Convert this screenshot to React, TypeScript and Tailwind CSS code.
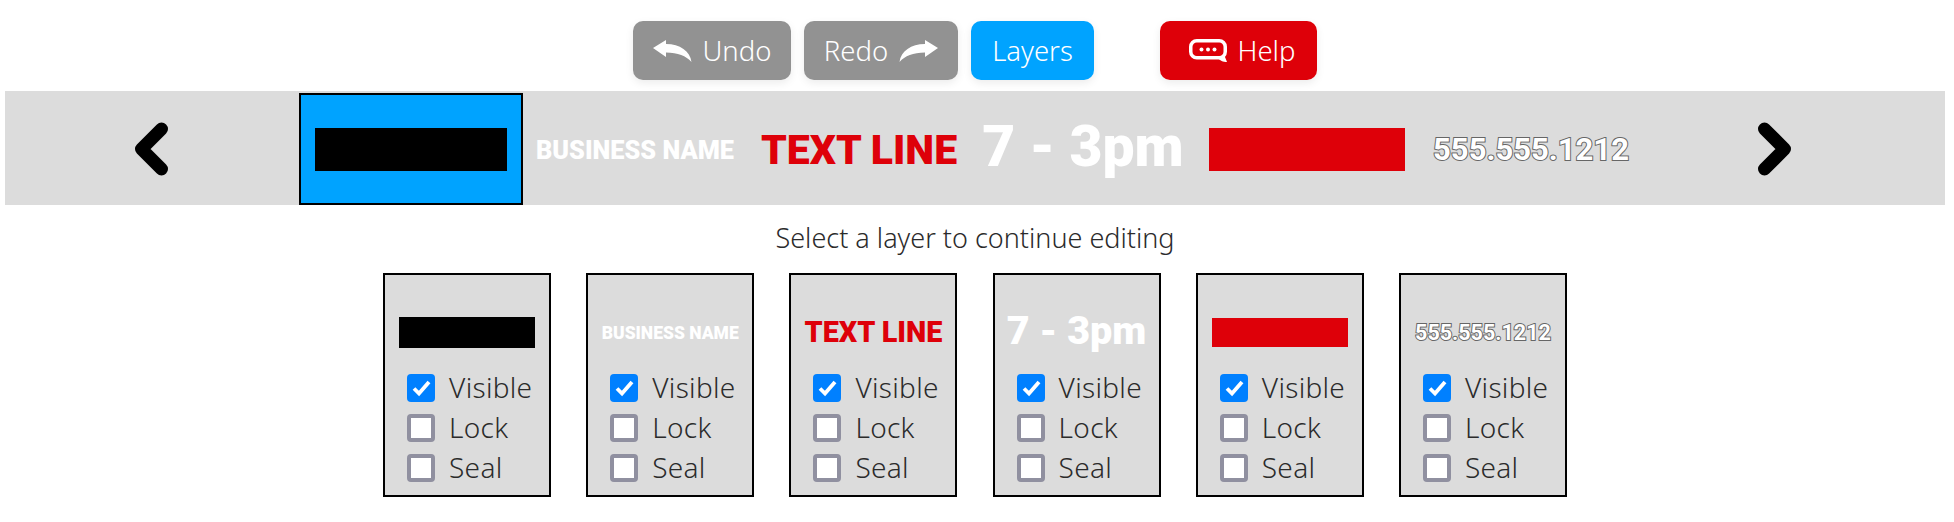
const ui = "font-['Noto_Sans',sans-serif]";
const logo = "font-['Roboto',sans-serif] whitespace-nowrap";
const outlined = "[-webkit-text-stroke:2px_#666] [paint-order:stroke_fill]";

function HelpIcon() {
  return (
    <svg viewBox="0 0 38 23" className="h-[23px] w-[38px]" fill="none">
      <rect x="1.75" y="1.75" width="34.5" height="17" rx="6" stroke="white" strokeWidth="3.5" />
      <path d="M28 18h8l2 5c-4 0-7-1-10-5z" fill="white" />
      <circle cx="12.5" cy="10.5" r="2" fill="white" />
      <circle cx="19" cy="10.5" r="2" fill="white" />
      <circle cx="25.5" cy="10.5" r="2" fill="white" />
    </svg>
  );
}

function ReplyArrow({ flip }: { flip?: boolean }) {
  return (
    <svg viewBox="0 0 39 22" className={`h-[22px] w-[39px] ${flip ? "-scale-x-100" : ""}`}>
      <path d="M0 8 13 0v4C27 4 37 11 38.5 22 33 16 25 12.5 13 12.5V17z" fill="white" />
    </svg>
  );
}

function Chevron({ flip }: { flip?: boolean }) {
  return (
    <svg viewBox="0 0 36 54" className={`h-[54px] w-[36px] ${flip ? "-scale-x-100" : ""}`} fill="none">
      <path d="M27.5 7 7.5 27l20 20" stroke="black" strokeWidth="13" strokeLinecap="round" strokeLinejoin="round" />
    </svg>
  );
}

function BandItem({ children, selected }: { children: React.ReactNode; selected?: boolean }) {
  return (
    <div
      className={`flex h-[112px] w-[224px] items-center justify-center ${
        selected ? "border-2 border-black bg-[#00a3ff]" : ""
      }`}
    >
      {children}
    </div>
  );
}

function Check({ label, checked }: { label: string; checked?: boolean }) {
  return (
    <label className="flex h-[28px] items-center gap-[14px]">
      {checked ? (
        <span className="flex size-[28px] items-center justify-center rounded-[4px] bg-[#0080ff]">
          <svg viewBox="0 0 28 28" className="size-[28px]" fill="none">
            <path d="M7 14.5l5 5L22 8" stroke="white" strokeWidth="3.8" />
          </svg>
        </span>
      ) : (
        <span className="size-[28px] rounded-[4px] border-[4px] border-[#9090a0] bg-white" />
      )}
      <span className="pb-[2px] text-[28px] font-light leading-none tracking-[0.3px] text-[#2b2b2b]">{label}</span>
    </label>
  );
}

function LayerCard({ children }: { children: React.ReactNode }) {
  return (
    <div className="h-[224px] w-[168px] border-2 border-black bg-[#dcdcdc]">
      <div className="flex h-[99px] items-end justify-center pb-[10.5px]">
        <div className="flex h-[62px] items-center justify-center">{children}</div>
      </div>
      <div className="flex flex-col gap-[12px] pl-[22px]">
        <Check label="Visible" checked />
        <Check label="Lock" />
        <Check label="Seal" />
      </div>
    </div>
  );
}

const btn =
  "flex h-[59px] items-center justify-center gap-[11px] rounded-[10px] text-[27.5px] font-light text-white shadow-[0_3px_8px_rgba(0,0,0,0.08)]";

export default function App() {
  return (
    <div className={`w-[1950px] bg-white pt-[21px] ${ui}`}>
      {/* Toolbar */}
      <div className="flex justify-center">
        <div className={`${btn} w-[158px] bg-[#929292]`}>
          <ReplyArrow />
          Undo
        </div>
        <div className={`${btn} ml-[13px] w-[154px] bg-[#929292]`}>
          Redo
          <ReplyArrow flip />
        </div>
        <div className={`${btn} ml-[13px] h-[58px] w-[123px] bg-[#00a3ff]`}>Layers</div>
        <div className={`${btn} ml-[66px] w-[157px] bg-[#de0009] pl-[7px]`}>
          <HelpIcon />
          Help
        </div>
      </div>

      {/* Layer carousel */}
      <div className="mx-[5px] mt-[11px] flex h-[114px] items-end bg-[#dcdcdc]">
        <div className="flex h-[112px] w-[294px] items-center pl-[129px]">
          <Chevron />
        </div>
        <BandItem selected>
          <div className="h-[43px] w-[192px] bg-black" />
        </BandItem>
        <BandItem>
          <span className={`${logo} pt-[3px] text-[25.3px] font-black text-white`}>BUSINESS NAME</span>
        </BandItem>
        <BandItem>
          <span className={`${logo} pt-[3px] text-[41px] font-black text-[#de0009]`}>TEXT LINE</span>
        </BandItem>
        <BandItem>
          <span className={`${logo} pb-[4px] text-[57px] font-black text-white`}>7 - 3pm</span>
        </BandItem>
        <BandItem>
          <div className="h-[43px] w-[196px] bg-[#de0009]" />
        </BandItem>
        <BandItem>
          <span className={`${logo} pt-[3px] text-[31px] font-bold text-white ${outlined}`}>555.555.1212</span>
        </BandItem>
        <div className="flex h-[112px] items-center pl-[113px]">
          <Chevron flip />
        </div>
      </div>

      <p className="mt-[18px] text-center text-[27px] font-light leading-[30px] text-[#2b2b2b]">Select a layer to continue editing</p>

      {/* Layer cards */}
      <div className="mt-[20px] flex justify-center gap-[35.2px]">
        <LayerCard>
          <div className="h-[31px] w-[136px] bg-black" />
        </LayerCard>
        <LayerCard>
          <span className={`${logo} pt-[1px] text-[17.5px] font-black text-white`}>BUSINESS NAME</span>
        </LayerCard>
        <LayerCard>
          <span className={`${logo} pt-[1px] text-[28.8px] font-black text-[#de0009]`}>TEXT LINE</span>
        </LayerCard>
        <LayerCard>
          <span className={`${logo} pb-[3px] text-[39.5px] font-black text-white`}>7 - 3pm</span>
        </LayerCard>
        <LayerCard>
          <div className="h-[29px] w-[136px] bg-[#de0009]" />
        </LayerCard>
        <LayerCard>
          <span className={`${logo} pt-[1px] text-[21.5px] font-bold text-white ${outlined}`}>555.555.1212</span>
        </LayerCard>
      </div>
    </div>
  );
}
